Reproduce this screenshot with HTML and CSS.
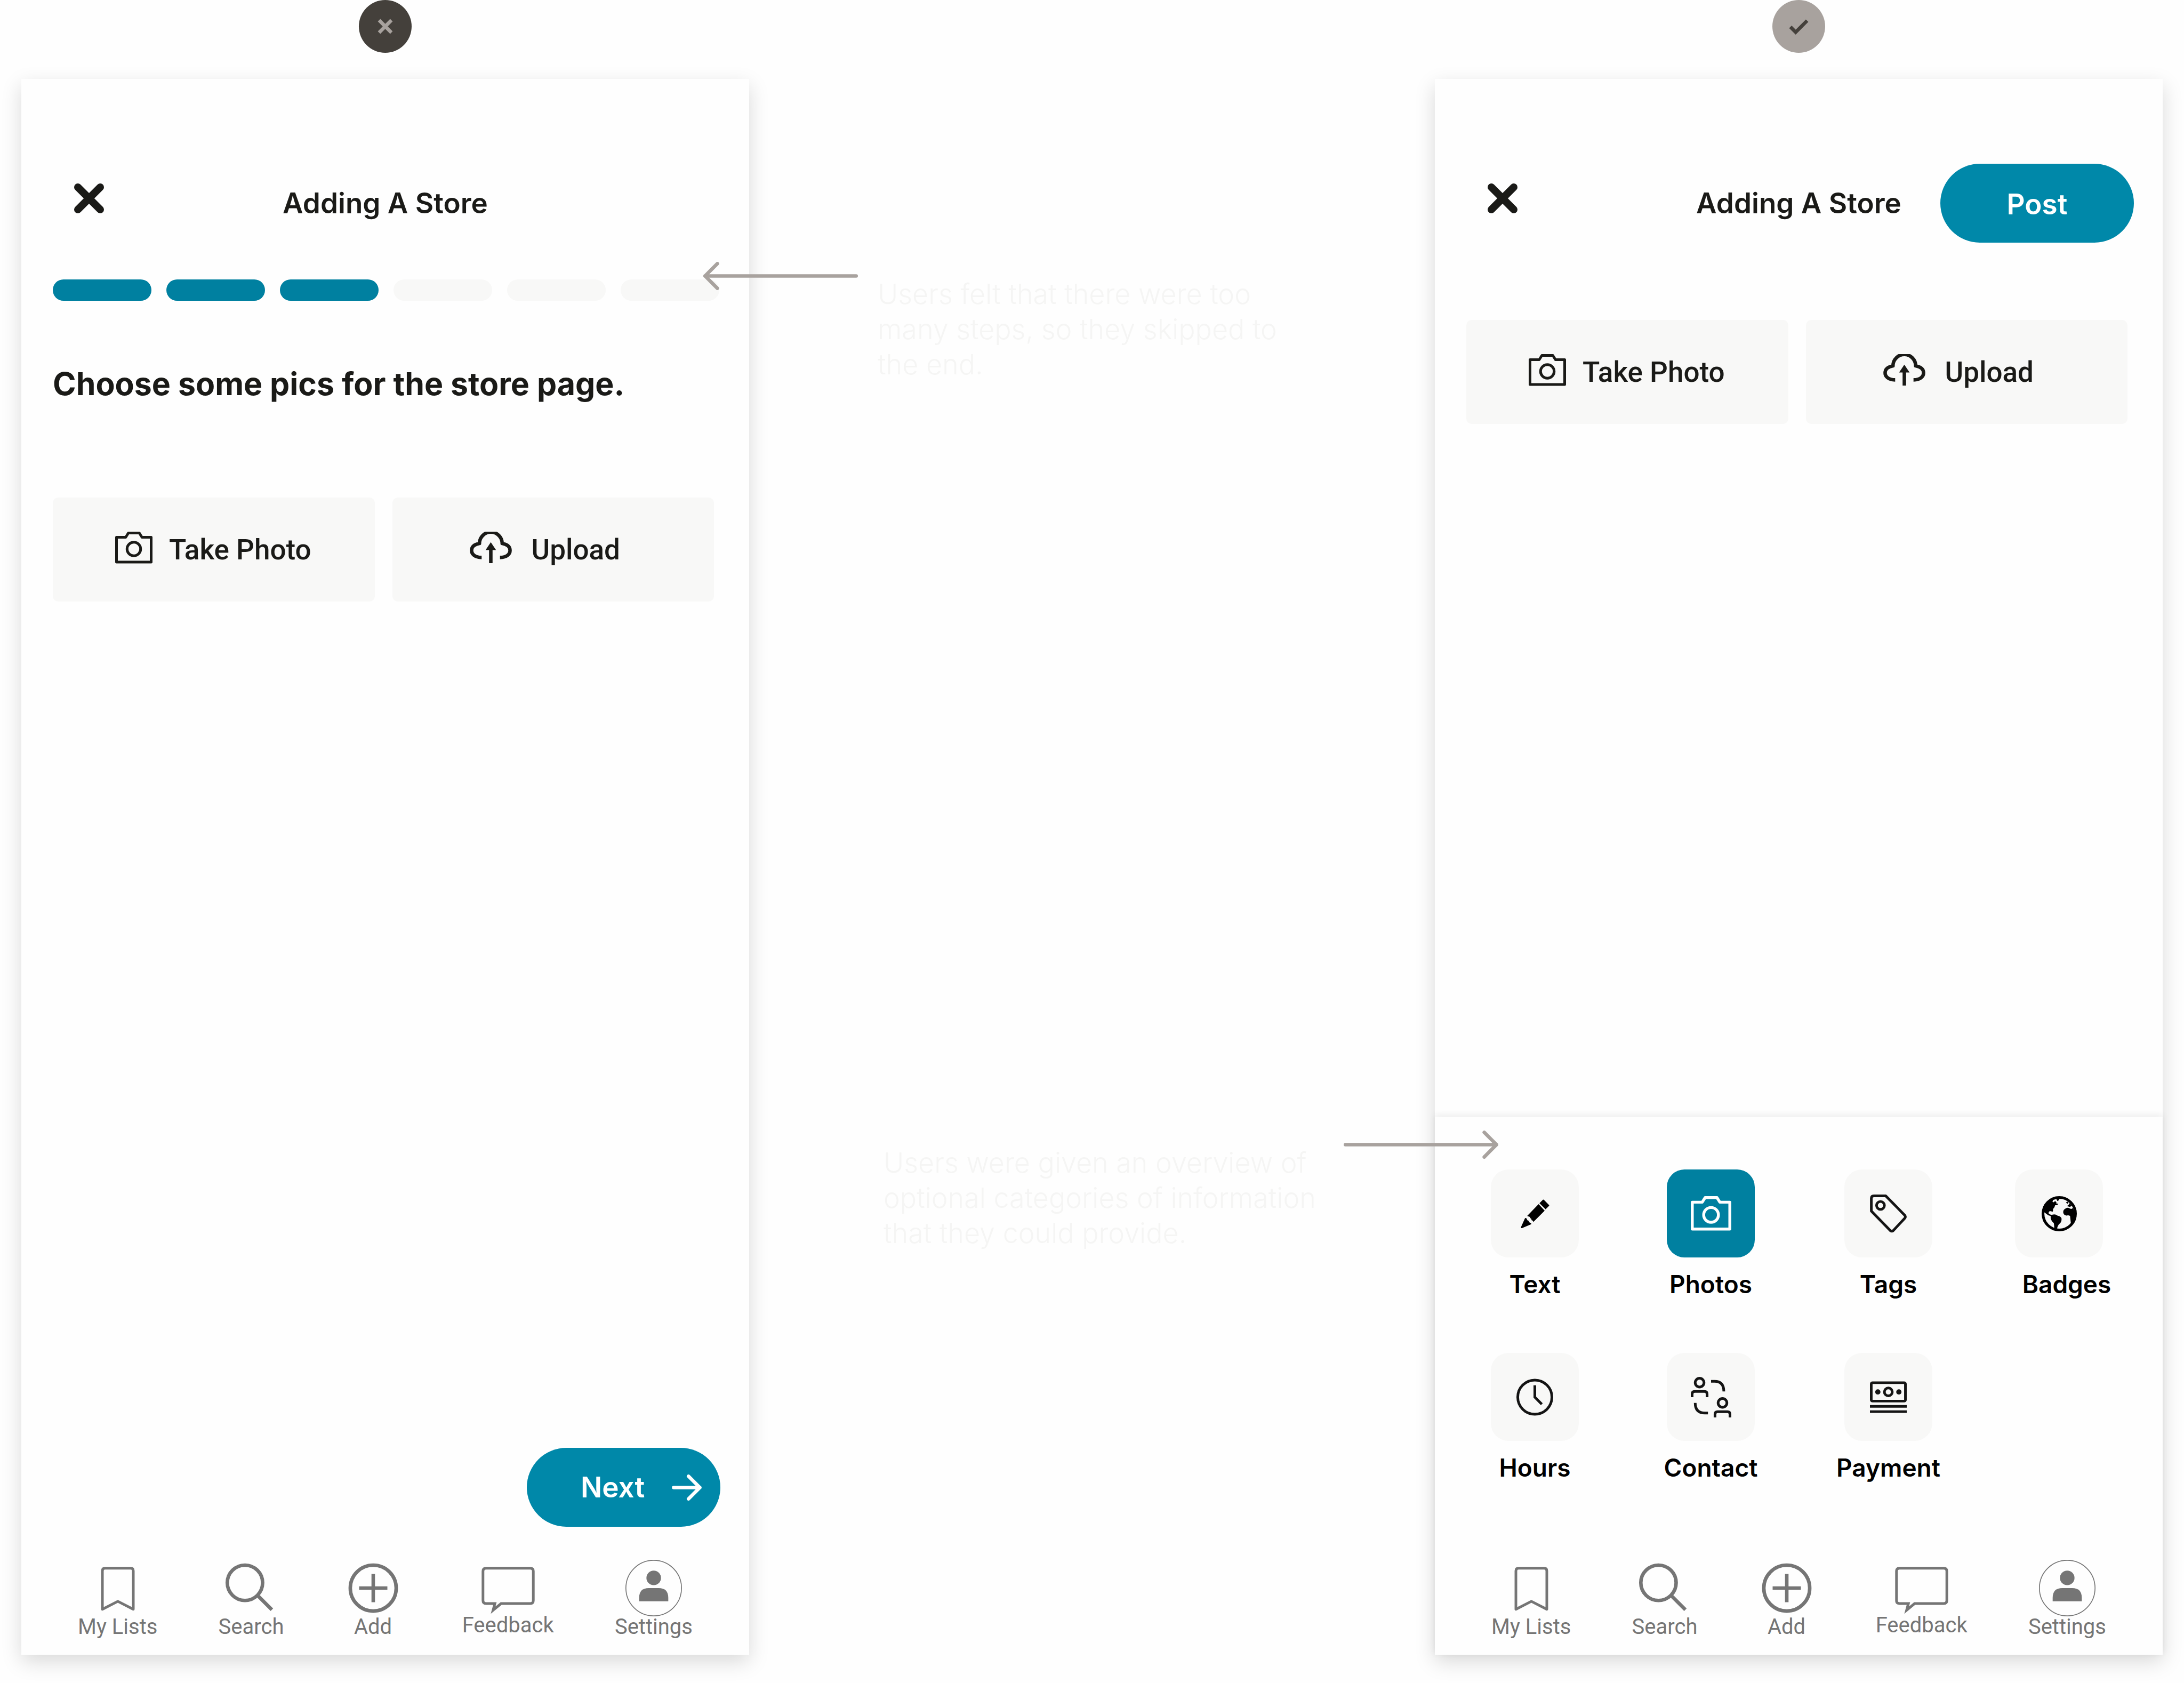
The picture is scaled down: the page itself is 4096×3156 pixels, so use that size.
FILE: index.html
```html
<!DOCTYPE html>
<html lang="en">
<head>
<meta charset="utf-8">
<meta name="viewport" content="width=device-width, initial-scale=1">
<title>Adding A Store: before and after</title>
<link rel="stylesheet" href="styles.css">
</head>
<body>

<svg class="sprite" aria-hidden="true">
  <symbol id="i-close" viewBox="0 0 58 58"><path d="M8 8 50 50M50 8 8 50" fill="none" stroke="currentColor" stroke-width="14" stroke-linecap="round"/></symbol>
  <symbol id="i-camera" viewBox="0 0 28 24"><path d="M1 4.2H7.9L9.9 1H18.1L20.1 4.2H27V22.8H1Z" fill="none" stroke="currentColor" stroke-width="2" stroke-linejoin="round"/><circle cx="14" cy="13" r="5.1" fill="none" stroke="currentColor" stroke-width="2"/></symbol>
  <symbol id="i-cloud" viewBox="0 0 96 72"><path d="M27 59C11 59 4 51 4 43C4 34 11 29 22 27A26 26 0 0 1 74 27C85 29 92 34 92 43C92 51 85 59 69 59" fill="none" stroke="currentColor" stroke-width="8" stroke-linejoin="round"/><path d="M44 72V42H36L48 24 60 42H52V72Z" fill="currentColor"/></symbol>
  <symbol id="i-bookmark" viewBox="0 0 128 128"><path transform="translate(26 16)" d="M3 96V9Q3 3 9 3H67Q73 3 73 9V96L38 78Z" fill="none" stroke="currentColor" stroke-width="6" stroke-linejoin="round"/></symbol>
  <symbol id="i-search" viewBox="0 0 128 128"><g transform="translate(6 8)" fill="none" stroke="currentColor" stroke-width="8"><circle cx="44" cy="44" r="40"/><path d="M73 73 105 105"/></g></symbol>
  <symbol id="i-add" viewBox="0 0 128 128"><g transform="translate(8 8)" fill="none" stroke="currentColor" stroke-width="8"><circle cx="56" cy="56" r="52"/><path d="M56 24V88M24 56H88"/></g></symbol>
  <symbol id="i-feedback" viewBox="0 0 128 128"><path transform="translate(4 16)" d="M10 3H110Q117 3 117 10V76Q117 83 110 83H44L26 98L30 83H10Q3 83 3 76V10Q3 3 10 3Z" fill="none" stroke="currentColor" stroke-width="6"/></symbol>
  <symbol id="i-user" viewBox="0 0 128 128"><circle cx="64" cy="64" r="63" fill="none" stroke="currentColor" stroke-width="2"/><circle cx="64" cy="41" r="16.500" fill="currentColor"/><path d="M31 94V86Q31 64 53 64H75Q97 64 97 86V94Z" fill="currentColor"/></symbol>
  <symbol id="i-arrow" viewBox="0 0 68 60"><path d="M4 30H64M38 4 64 30 38 56" fill="none" stroke="currentColor" stroke-width="8" stroke-linecap="round" stroke-linejoin="round"/></symbol>
  <symbol id="i-pencil" viewBox="0 0 66 66"><g fill="currentColor"><path d="M51 1Q52 0 53 1L65 13Q66 14 65 15L57 23 43 9Z"/><path d="M41 11 55 26 29 52Q28 48 25 48Q25 44 22 43Q21 39 17 39L15 38Z"/><path d="M10 43Q13 42 14 45Q15 49 18 49Q19 53 22 54Q25 54 24 57L3 66Q0 67 1 63Z"/></g></symbol>
  <symbol id="i-tag" viewBox="0 0 84 88"><path d="M9 3H36L80 48Q82 51 80 54L53 83Q50 85 47 83L3 38V9Q3 3 9 3Z" fill="none" stroke="currentColor" stroke-width="6" stroke-linejoin="round"/><circle cx="24" cy="25" r="9" fill="none" stroke="currentColor" stroke-width="6"/></symbol>
  <symbol id="i-globe" viewBox="0 0 78 78"><circle cx="39" cy="39" r="36" fill="none" stroke="currentColor" stroke-width="6"/><g fill="currentColor"><path d="M4 32Q9 14 26 7L24 12 26 14 30 11 33 14 32 16 37 17Q36 20 30 20Q29 25 25 29Q26 32 24 35Q22 33 18 33Q14 36 16 39Q20 42 24 41Q30 39 35 43Q42 44 44 49Q45 56 40 61Q35 65 34 74L28 74Q28 65 27 60Q21 55 20 49L20 44Q14 43 10 39Q5 36 4 32Z"/><path d="M29 5H40Q38 10 35 11L33 7Z"/><path d="M54 14 57 12 60 14 57 17Z"/><path d="M55 22Q61 20 62 15L66 20 69 23Q65 21 63 24Z"/><path d="M48 37Q47 31 52 28Q58 24 61 27Q67 30 69 26L75 38Q74 53 65 62L63 44Q60 42 55 43Q49 42 48 37Z"/></g></symbol>
  <symbol id="i-clock" viewBox="0 0 84 84"><circle cx="42" cy="42" r="39" fill="none" stroke="currentColor" stroke-width="6"/><path d="M42 15V42L58 58" fill="none" stroke="currentColor" stroke-width="6"/></symbol>
  <symbol id="i-contact" viewBox="0 0 92 92"><g fill="none" stroke="currentColor" stroke-width="6"><circle cx="20" cy="13" r="10"/><path d="M3 46V39Q3 33 9 33H31Q37 33 37 39V46"/><circle cx="72" cy="59" r="10"/><path d="M55 92V85Q55 79 61 79H83Q89 79 89 85V92"/><path d="M46 10H54Q75 10 75 33M10 59Q10 82 32 82H39"/></g></symbol>
  <symbol id="i-cash" viewBox="0 0 84 72"><rect x="3" y="3" width="78" height="42" rx="3" fill="none" stroke="currentColor" stroke-width="6"/><circle cx="42" cy="24" r="9" fill="none" stroke="currentColor" stroke-width="6"/><circle cx="18" cy="24" r="6" fill="currentColor"/><circle cx="66" cy="24" r="6" fill="currentColor"/><path d="M0 57H84M0 69H84" stroke="currentColor" stroke-width="6"/></symbol>
</svg>

<main class="board">
  <section class="column" aria-label="Before">
    <span class="badge badge-dark"><svg viewBox="0 0 120 120" role="img" aria-label="Rejected"><path d="M46 46 74 74M74 46 46 74" fill="none" stroke="currentColor" stroke-width="8"/></svg></span>
    <article class="phone">
      <header class="topbar">
        <button class="close" type="button" aria-label="Close"><svg><use href="#i-close"/></svg></button>
        <h1 class="title">Adding A Store</h1>
      </header>
      <ol class="steps" aria-label="Step 3 of 6">
        <li class="step step-done"></li><li class="step step-done"></li><li class="step step-done"></li><li class="step"></li><li class="step"></li><li class="step"></li>
      </ol>
      <h2 class="prompt">Choose some pics for the store page.</h2>
      <div class="sources">
        <button class="source" type="button"><svg class="camera"><use href="#i-camera"/></svg>Take Photo</button>
        <button class="source source-upload" type="button"><svg class="cloud"><use href="#i-cloud"/></svg>Upload</button>
      </div>
      <button class="pill pill-next" type="button">Next<svg class="pill-arrow"><use href="#i-arrow"/></svg></button>
      <nav class="tabs">
        <a class="tab" href="#lists"><svg class="tab-icon"><use href="#i-bookmark"/></svg>My Lists</a>
        <a class="tab" href="#search"><svg class="tab-icon"><use href="#i-search"/></svg>Search</a>
        <a class="tab" href="#add"><svg class="tab-icon"><use href="#i-add"/></svg>Add</a>
        <a class="tab tab-feedback" href="#feedback"><svg class="tab-icon"><use href="#i-feedback"/></svg>Feedback</a>
        <a class="tab" href="#settings"><svg class="tab-icon"><use href="#i-user"/></svg>Settings</a>
      </nav>
    </article>
  </section>

  <aside class="notes">
    <div class="note note-first">
      <svg class="pointer" viewBox="0 0 352 64"><path d="M4 32H348M32 4 4 32 32 60" fill="none" stroke="currentColor" stroke-width="8" stroke-linecap="round" stroke-linejoin="round"/></svg>
      <p>Users felt that there were too<br>many steps, so they skipped to<br>the end.</p>
    </div>
    <div class="note note-second">
      <p>Users were given an overview of<br>optional categories of information<br>that they could provide.</p>
      <svg class="pointer" viewBox="0 0 352 64"><path d="M4 32H348M320 4 348 32 320 60" fill="none" stroke="currentColor" stroke-width="8" stroke-linecap="round" stroke-linejoin="round"/></svg>
    </div>
  </aside>

  <section class="column" aria-label="After">
    <span class="badge badge-light"><svg viewBox="0 0 120 120" role="img" aria-label="Approved"><path d="M41 61 53 73 79 47" fill="none" stroke="currentColor" stroke-width="8"/></svg></span>
    <article class="phone">
      <header class="topbar">
        <button class="close" type="button" aria-label="Close"><svg><use href="#i-close"/></svg></button>
        <h1 class="title">Adding A Store</h1>
        <button class="pill pill-post" type="button">Post</button>
      </header>
      <div class="sources sources-high">
        <button class="source" type="button"><svg class="camera"><use href="#i-camera"/></svg>Take Photo</button>
        <button class="source source-upload" type="button"><svg class="cloud"><use href="#i-cloud"/></svg>Upload</button>
      </div>
      <div class="sheet">
        <div class="categories">
          <button class="category" type="button"><span class="tile tile-black"><svg class="pencil"><use href="#i-pencil"/></svg></span>Text</button>
          <button class="category" type="button"><span class="tile tile-active"><svg class="tile-camera"><use href="#i-camera"/></svg></span>Photos</button>
          <button class="category" type="button"><span class="tile"><svg><use href="#i-tag"/></svg></span>Tags</button>
          <button class="category category-wide" type="button"><span class="tile tile-black"><svg class="globe"><use href="#i-globe"/></svg></span>Badges</button>
          <button class="category" type="button"><span class="tile"><svg><use href="#i-clock"/></svg></span>Hours</button>
          <button class="category" type="button"><span class="tile"><svg class="people"><use href="#i-contact"/></svg></span>Contact</button>
          <button class="category" type="button"><span class="tile"><svg><use href="#i-cash"/></svg></span>Payment</button>
        </div>
        <nav class="tabs">
          <a class="tab" href="#lists"><svg class="tab-icon"><use href="#i-bookmark"/></svg>My Lists</a>
          <a class="tab" href="#search"><svg class="tab-icon"><use href="#i-search"/></svg>Search</a>
          <a class="tab" href="#add"><svg class="tab-icon"><use href="#i-add"/></svg>Add</a>
          <a class="tab tab-feedback" href="#feedback"><svg class="tab-icon"><use href="#i-feedback"/></svg>Feedback</a>
          <a class="tab" href="#settings"><svg class="tab-icon"><use href="#i-user"/></svg>Settings</a>
        </nav>
      </div>
    </article>
  </section>
</main>
</body>
</html>
```
FILE: styles.css
```css
:root {
  --ink: #1a1a17;
  --teal: #0080a0;
  --teal-button: #0088a9;
  --tile: #f8f8f7;
  --stone: #a8a29e;
  --stone-dark: #44403b;
  --grey: #757575;
}

* { box-sizing: border-box; }

body {
  margin: 0;
  background: #fefefe;
  color: var(--ink);
  font-family: Inter, "Liberation Sans", sans-serif;
}

button {
  margin: 0;
  padding: 0;
  border: 0;
  background: none;
  color: inherit;
  font: inherit;
  cursor: pointer;
}

svg { display: block; flex: none; }

.sprite { position: absolute; width: 0; height: 0; }

.board {
  display: grid;
  grid-template-columns: minmax(0, 1fr) 1286px minmax(0, 1fr);
  min-height: 100vh;
  padding: 0 40px 53px;
}

.column {
  display: flex;
  flex-direction: column;
  align-items: center;
  gap: 49px;
}

.badge {
  width: 99px;
  height: 99px;
  border-radius: 50%;
}
.badge-dark { background: var(--stone-dark); color: var(--stone); }
.badge-light { background: var(--stone); color: var(--stone-dark); }

.phone {
  display: flex;
  flex: 1;
  flex-direction: column;
  align-self: stretch;
  background: #fefefe;
  box-shadow: 0 13px 36px rgba(0, 0, 0, 0.15);
}

/* Header */
.topbar {
  display: grid;
  grid-template-columns: 1fr auto 1fr;
  align-items: center;
  height: 148px;
  margin-top: 159px;
  padding: 0 54px;
}
.close {
  justify-self: start;
  padding: 0 0 18px 44px;
}
.close svg { width: 58px; height: 58px; }
.title {
  margin: 0;
  font-size: 53px;
  font-weight: 600;
  line-height: 64px;
}

.pill {
  display: flex;
  align-items: center;
  width: 363px;
  height: 148px;
  border-radius: 74px;
  background: var(--teal-button);
  color: #fff;
  font-size: 53px;
  font-weight: 600;
  line-height: 64px;
}
.pill-post {
  justify-content: center;
  justify-self: end;
  padding-top: 4px;
}
.pill-next {
  align-self: flex-end;
  justify-content: space-between;
  margin: auto 54px 0 0;
  padding: 0 35px 0 101px;
}
.pill-arrow { width: 56px; height: 49px; }

/* Progress */
.steps {
  display: flex;
  justify-content: space-between;
  margin: 69px 56px 0 59px;
  padding: 0;
  list-style: none;
}
.step {
  width: 185px;
  height: 40px;
  border-radius: 20px;
  background: var(--tile);
}
.step-done { background: var(--teal); }

.prompt {
  margin: 120px 59px 0;
  font-size: 59px;
  font-weight: 700;
  line-height: 72px;
}

.sources {
  display: grid;
  grid-template-columns: 1fr 1fr;
  gap: 33px;
  margin: 177px 66px 0 59px;
}
.sources-high { margin-top: 145px; }
.source {
  display: flex;
  align-items: center;
  gap: 31px;
  height: 195px;
  padding-left: 117px;
  border-radius: 10px;
  background: var(--tile);
  font-family: Roboto, "Liberation Sans", sans-serif;
  font-size: 53px;
  font-weight: 500;
  line-height: 62px;
}
.source-upload { gap: 37px; padding-left: 145px; }
.source svg { margin-bottom: 8px; }
.camera { width: 70px; height: 60px; }
.cloud { width: 79px; height: 59px; }

/* Tab bar */
.tabs {
  display: flex;
  justify-content: space-between;
  padding: 62px 106px 32px;
}
.tab {
  display: flex;
  flex-direction: column;
  align-items: center;
  color: var(--grey);
  font-family: Roboto, "Liberation Sans", sans-serif;
  font-size: 40px;
  line-height: 40px;
  text-decoration: none;
}
.tab-feedback { line-height: 34px; }
.tab-icon { width: 106px; height: 106px; }

/* Category sheet */
.sheet {
  margin-top: auto;
  padding-top: 99px;
  background: #fefefe;
  box-shadow: 0 -3px 12px rgba(0, 0, 0, 0.08);
}
.categories {
  display: grid;
  grid-template-columns: 330fr 333fr 320fr 194fr;
  row-gap: 98px;
  padding: 0 83px 80px 105px;
}
.category {
  display: flex;
  flex-direction: column;
  align-items: center;
  gap: 19px;
  width: 165px;
  color: #000;
  font-size: 46px;
  font-weight: 600;
  line-height: 62px;
}
.category-wide { width: 194px; }
.category-wide .tile { align-self: flex-start; }
.tile {
  display: grid;
  place-items: center;
  width: 165px;
  height: 165px;
  border-radius: 33px;
  background: var(--tile);
  color: #141414;
}
.tile svg { width: 69px; height: 72px; }
.tile-black { color: #000; }
.tile-active { background: var(--teal); color: #fff; }
.tile .pencil { width: 54px; height: 54px; }
.tile .tile-camera { width: 76px; height: 65px; }
.tile .globe { width: 66px; height: 66px; }
.tile .people { width: 76px; height: 76px; }

/* Annotations */
.notes {
  position: relative;
  color: #f5f5f4;
}
.note {
  position: absolute;
  display: flex;
  font-size: 52px;
  font-weight: 300;
  line-height: 66px;
}
.note p {
  margin: 0;
  padding-top: 28px;
  white-space: nowrap;
}
.note-first { top: 491px; left: -86px; gap: 37px; }
.note-second {
  top: 2120px;
  right: -119px;
  left: 252px;
  justify-content: space-between;
}
.pointer {
  width: 290px;
  height: 53px;
  color: var(--stone);
}
```
